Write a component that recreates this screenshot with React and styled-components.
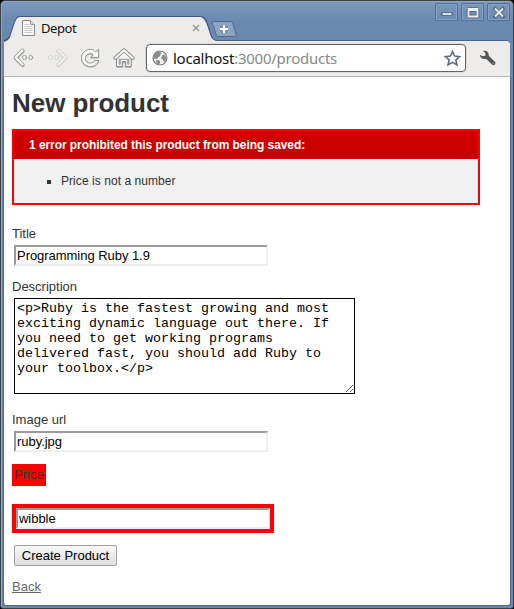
import React from "react";
import styled, { createGlobalStyle } from "styled-components";

const Global = createGlobalStyle`
  * { box-sizing: border-box; }
  body { margin: 0; background: #000; overflow: hidden; }
  svg { display: block; flex: none; }
`;

const Window = styled.div`
  display: flex;
  flex-direction: column;
  width: 514px;
  height: 609px;
  padding: 0 3px 3px;
  border: 1px solid #3c3f46;
  border-radius: 5px 5px 3px 3px;
  background: linear-gradient(#7f99bd 0, #6c8ab1 18px, #6a88ae 40px, #6a88ae 100%);
  box-shadow: inset 1px 1px 0 #8fa5c3;
  font-family: "Liberation Sans", Arial, sans-serif;
  color: #333;
`;

const TitleBar = styled.header`
  display: flex;
  align-items: flex-start;
  justify-content: space-between;
  height: 39px;
  flex: none;
`;

const TabStrip = styled.div`
  display: flex;
  align-items: flex-start;
  padding-top: 15px;
`;

const tabEdge = "M0 26 V24 C4 22 5 21 6 18 L10 6 C12 1 13 0 17 0 H195 C200 0 201 2 203 5 L207 17 C208 21 209 23 212 24 V26 Z";
const tabFace = "M0 26 C5 24 6 22 7 18 L11 6 C13 2 14 1 17 1 H195 C199 1 200 3 202 6 L206 18 C207 22 209 24 212 25 V26 Z";

const Tab = styled.div`
  position: relative;
  display: flex;
  align-items: center;
  width: 212px;
  height: 26px;
  padding: 0 16px 2px 18px;
  font: 13px "Noto Sans", sans-serif;
  letter-spacing: -0.4px;
  color: #111;
  z-index: 1;
  &::before, &::after {
    content: "";
    position: absolute;
    inset: 0;
    z-index: -1;
    background: #3f587b;
    clip-path: path("${tabEdge}");
  }
  &::after { background: #edecea; clip-path: path("${tabFace}"); }
`;

const TabTitle = styled.span`
  flex: 1;
  margin-left: 6px;
`;

const NewTab = styled.div`
  margin: 5px 0 0 -5px;
`;

const WindowControls = styled.div`
  display: flex;
  gap: 3px;
  padding-top: 2px;
`;

const Control = styled.div`
  display: grid;
  place-items: center;
  width: 23px;
  height: 18px;
  border: 1px solid #526e96;
  border-radius: 2px;
  box-shadow: inset 0 0 0 1px #8ba2c3;
`;

const Toolbar = styled.nav`
  display: flex;
  align-items: center;
  height: 37px;
  flex: none;
  padding: 0 14px 0 8px;
  border-top: 1px solid #496387;
  border-bottom: 1px solid #b5b4b2;
  border-radius: 0 4px 0 0;
  background: #edecea;
`;

const NavIcons = styled.div`
  display: flex;
  align-items: center;
  gap: 11px;
  margin-top: -1px;
`;

const AddressBar = styled.div`
  display: flex;
  align-items: center;
  width: 321px;
  height: 28px;
  margin: 0 13px 1px 11px;
  padding: 0 4px 0 5px;
  border: 1px solid #646464;
  border-radius: 4px;
  background: #fff;
  box-shadow: 0 0 0 1px #dddcda;
`;

const Url = styled.div`
  flex: 1;
  margin-left: 5px;
  font: 15px "Noto Sans", sans-serif;
  letter-spacing: -0.25px;
  color: #888;
  white-space: nowrap;
`;

const Host = styled.span`
  color: #111;
`;

const Page = styled.main`
  flex: 1;
  padding: 11px 8px 0;
  background: #fff;
  border-radius: 0 0 2px 2px;
  font-size: 13px;
  line-height: 15px;
  outline: 1px solid #526b8c;
  clip-path: inset(0 -1px -1px -1px);
`;

const Heading = styled.h1`
  margin: 0 0 10px;
  font-size: 26px;
  line-height: 31px;
  letter-spacing: -0.05px;
`;

const ErrorBox = styled.section`
  width: 468px;
  height: 76px;
  margin-bottom: 21px;
  border: 2px solid #f00;
  background: #f0f0f0;
  font-size: 12px;
`;

const ErrorTitle = styled.h2`
  height: 28px;
  margin: 0;
  padding: 0 15px;
  background: #c00;
  color: #fff;
  font-size: 12px;
  line-height: 28px;
  letter-spacing: -0.065px;
`;

const ErrorList = styled.ul`
  margin: 0;
  padding: 15px 0 0 47px;
  list-style: square;
  letter-spacing: 0.06px;
`;

const Field = styled.div`
  display: flex;
  flex-direction: column;
  align-items: flex-start;
  margin-bottom: ${(p) => p.$gap}px;
`;

const Label = styled.label`
  margin-bottom: 4px;
`;

const Input = styled.input`
  width: 254px;
  height: 21px;
  margin: 0 2px;
  padding: 1px;
  border: 2px solid;
  border-color: #9a9a9a #eee #eee #9a9a9a;
  border-radius: 0;
  background: #fff;
  color: #000;
  font: 13px "Liberation Sans", Arial, sans-serif;
  letter-spacing: -0.04px;
  outline: none;
`;

const TextArea = styled.textarea`
  width: 341px;
  height: 96px;
  margin: 0 2px;
  padding: 2px;
  border: 1px solid #000;
  border-radius: 0;
  background: #fff;
  color: #000;
  font: 13.33px/15px "Liberation Mono", monospace;
  overflow: hidden;
  outline: none;
`;

const InvalidLabel = styled.label`
  display: block;
  width: 34px;
  height: 22px;
  padding: 3px 2px;
  margin-bottom: 18px;
  background: #f00;
`;

const InvalidInput = styled.div`
  width: 262px;
  height: 29px;
  padding: 4px 2px;
  margin-bottom: 12px;
  background: #f00;
  ${Input} { display: block; }
`;

const Submit = styled.button`
  display: block;
  width: 103px;
  height: 21px;
  margin: 0 0 13px 2px;
  padding: 0;
  border: 1px solid #a0a0a0;
  border-radius: 2px;
  background: linear-gradient(#f8f8f8, #dedede);
  color: #000;
  font: 13px "Liberation Sans", Arial, sans-serif;
  white-space: nowrap;
`;

const BackLink = styled.a`
  color: #666;
  text-decoration: underline;
`;

const PageIcon = () => (
  <svg width="13" height="16" viewBox="0 0 13 16">
    <path d="M.5.5H8.5L12.5 4.5V15.5H.5Z" fill="#fafafa" stroke="#888" />
    <path d="M8.5 .5V4.5H12.5" fill="#ddd" stroke="#999" />
    <path d="M2.5 4.5H7M2.5 6.5H10.5M2.5 8.5H10.5M2.5 10.5H10.5M2.5 12.5H10.5" stroke="#c8c8c8" />
  </svg>
);

const CloseIcon = () => (
  <svg width="8" height="8" viewBox="0 0 8 8">
    <path d="M1 1L7 7M7 1L1 7" stroke="#999" strokeWidth="1.6" />
  </svg>
);

const PlusTab = () => (
  <svg width="26" height="17" viewBox="0 0 26 17">
    <path d="M3 .5H19C21 .5 21.5 1.5 22 3L25 13C25.5 15 25 15.5 23.5 15.5H8C6 15.5 5.5 14.5 5 13L1.5 3C1 1.5 1.5 .5 3 .5Z" fill="#8da3c2" stroke="#506b91" />
    <path d="M13 4V12M9 8H17" stroke="#4f698f" strokeWidth="4.4" />
    <path d="M13 4V12M9 8H17" stroke="#fff" strokeWidth="2.4" />
  </svg>
);

const ArrowIcon = ({ forward }) => (
  <svg width="23" height="22" viewBox="0 0 23 22" fill="none" strokeLinecap="round" strokeLinejoin="round">
    <g transform={forward ? "translate(23 0) scale(-1 1)" : undefined} opacity={forward ? 0.32 : 1}>
      <path d="M10.5 3.5L3.5 10.5L10.5 17.5" stroke="#aaa" strokeWidth="3.6" transform="translate(.3 1)" />
      <path d="M10.5 3.5L3.5 10.5L10.5 17.5" stroke="#999" strokeWidth="3.8" />
      <path d="M10.5 3.5L3.5 10.5L10.5 17.5" stroke="#f9f9f8" strokeWidth="2.2" />
      <circle cx="12.5" cy="10.5" r="2" fill="#f9f9f8" stroke="#999" />
      <circle cx="18.7" cy="10.5" r="2" fill="#f9f9f8" stroke="#999" />
    </g>
  </svg>
);

const reloadPath = "M15.6 5L18.6 2.3V10.4H10.8L13.2 7.7C11.8 6.5 9.3 6.2 7.5 7.4C4.8 9.2 4.8 13 7 14.9C9.5 17 13.4 16 14.5 13.5H18.7C17.5 17.5 14.4 19.5 10.5 19.5C5.2 19.5 1.5 16 1.5 11C1.5 6 5.4 2.3 10.4 2.3C12.6 2.3 14.3 3.4 15.6 5Z";

const ReloadIcon = () => (
  <svg width="22" height="22" viewBox="0 0 22 22" strokeLinejoin="round">
    <path d={reloadPath} fill="#bbb" stroke="#c2c2c1" transform="translate(0 .8)" />
    <path d={reloadPath} fill="#f8f8f7" stroke="#929292" />
  </svg>
);

const HomeIcon = () => (
  <svg width="22" height="22" viewBox="0 0 22 22" strokeLinejoin="round" strokeLinecap="round">
    <path d="M4 11.5V19.5H9.5V15H12.5V19.5H18V11.5" fill="#c8c8c6" stroke="#bbb" strokeWidth="1.4" transform="translate(0 .8)" />
    <path d="M3.8 10.5L11 4.5L18.2 10.5V19.5H12.7V14.5H9.3V19.5H3.8Z" fill="#f5f5f4" stroke="#888" />
    <path d="M6.2 12V17.3H7.2V12.3H14.8V17.3H15.8V12" fill="none" stroke="#888" strokeWidth=".9" />
    <path d="M2.3 11L11 3.2L19.7 11" fill="none" stroke="#888" strokeWidth="3.7" />
    <path d="M2.3 11L11 3.2L19.7 11" fill="none" stroke="#f8f8f7" strokeWidth="2" />
  </svg>
);

const GlobeIcon = () => (
  <svg width="16" height="16" viewBox="0 0 16 16">
    <circle cx="8" cy="8" r="7" fill="#f3f3f3" stroke="#777" strokeWidth="1.1" />
    <path d="M3 3.5C5 1.5 7.2 1.6 8.8 2.2L9.8 3.5L7.8 4.5L8.5 6L6.2 7.2L5 9.2L3 8.5L1.4 9.2C1.1 6.5 1.8 4.7 3 3.5ZM10 5.5L12.5 4.5L14.3 7L13.7 10.5L12 12.2L11 9.8L9.2 8.8ZM4.2 10L7.6 10.6L8.5 12.3L7 14.6L4.2 13Z" fill="#8b8b8b" />
  </svg>
);

const StarIcon = () => (
  <svg width="17" height="17" viewBox="0 0 17 17">
    <path d="M8.5 1.5L10.6 6.1L15.6 6.6L11.9 9.9L13 15L8.5 12.4L4 15L5.1 9.9L1.4 6.6L6.4 6.1Z" fill="#fff" stroke="#596b88" strokeWidth="1.6" strokeLinejoin="miter" />
  </svg>
);

const WrenchIcon = () => (
  <svg width="17" height="17" viewBox="0 0 17 17">
    <path d="M4.1 1C7.5 0 10.2 2.4 9.7 5.8L16.1 12.1C17.2 13.6 15.4 15.9 13.6 14.9L7 8.8C3.8 9.8 1 8 .8 4.8L3.6 6.3L6.3 5.7L6.5 3.3Z" fill="#555" />
    <circle cx="14.1" cy="13.2" r=".8" fill="#999" />
  </svg>
);

const controlPaths = {
  minimize: "M2.5 8H11.5",
  maximize: "M2.5 3H11.5V10.5H2.5ZM2.5 4H11.5",
  close: "M3 2.5L11 10.5M11 2.5L3 10.5",
};

const ControlIcon = ({ kind }) => (
  <svg width="14" height="13" viewBox="0 0 14 13" fill="none">
    <path d={controlPaths[kind]} stroke="#4c668d" strokeWidth="3.6" strokeLinejoin="round" strokeLinecap="round" />
    <path d={controlPaths[kind]} stroke="#f0f0ee" strokeWidth="1.8" />
  </svg>
);

const description = `<p>Ruby is the fastest growing and most
exciting dynamic language out there. If
you need to get working programs
delivered fast, you should add Ruby to
your toolbox.</p>`;

export default function App() {
  return (
    <>
      <Global />
      <Window>
        <TitleBar>
          <TabStrip>
            <Tab>
              <PageIcon />
              <TabTitle>Depot</TabTitle>
              <CloseIcon />
            </Tab>
            <NewTab><PlusTab /></NewTab>
          </TabStrip>
          <WindowControls>
            {Object.keys(controlPaths).map((kind) => (
              <Control key={kind}><ControlIcon kind={kind} /></Control>
            ))}
          </WindowControls>
        </TitleBar>
        <Toolbar>
          <NavIcons>
            <ArrowIcon />
            <ArrowIcon forward />
            <ReloadIcon />
            <HomeIcon />
          </NavIcons>
          <AddressBar>
            <GlobeIcon />
            <Url><Host>localhost</Host>:3000/products</Url>
            <StarIcon />
          </AddressBar>
          <WrenchIcon />
        </Toolbar>
        <Page>
          <Heading>New product</Heading>
          <ErrorBox>
            <ErrorTitle>1 error prohibited this product from being saved:</ErrorTitle>
            <ErrorList><li>Price is not a number</li></ErrorList>
          </ErrorBox>
          <Field $gap={13}>
            <Label>Title</Label>
            <Input defaultValue="Programming Ruby 1.9" />
          </Field>
          <Field $gap={18}>
            <Label>Description</Label>
            <TextArea defaultValue={description} spellCheck={false} />
          </Field>
          <Field $gap={12}>
            <Label>Image url</Label>
            <Input defaultValue="ruby.jpg" />
          </Field>
          <InvalidLabel>Price</InvalidLabel>
          <InvalidInput><Input defaultValue="wibble" /></InvalidInput>
          <Submit>Create Product</Submit>
          <BackLink href="#">Back</BackLink>
        </Page>
      </Window>
    </>
  );
}
